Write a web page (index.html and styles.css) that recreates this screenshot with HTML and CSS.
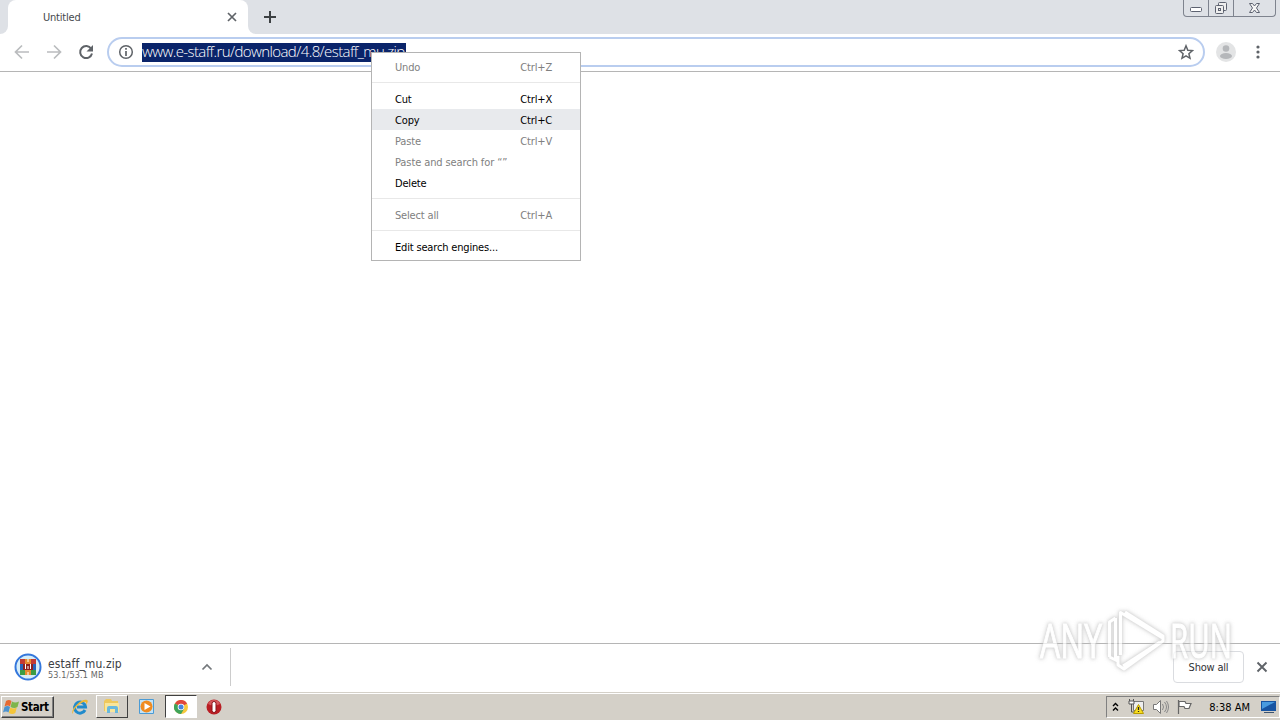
FILE: index.html
```html
<!DOCTYPE html>
<html lang="en">
<head>
<meta charset="utf-8">
<title>Untitled</title>
<link rel="stylesheet" href="styles.css">
</head>
<body>
<div class="screen">
  <header class="tabstrip">
    <div class="previous-tab"></div>
    <div class="tab"><span class="tab-title">Untitled</span>
      <svg class="tab-close" width="10" height="10" viewBox="0 0 10 10"><path d="M1 1l8 8M9 1L1 9" stroke="#5f6368" stroke-width="1.7"/></svg>
    </div>
    <div class="tab-edge"><svg width="14" height="14" viewBox="0 0 14 14"><path d="M7 1v12M1 7h12" stroke="#3c4043" stroke-width="2"/></svg></div>
    <div class="window-controls">
      <span class="control minimize"><svg width="14" height="8"><rect x="1.500" y="1.500" width="11" height="4" rx="1" fill="#fff" stroke="#5d6270"/></svg></span>
      <span class="control restore"><svg width="14" height="14" fill="#eee" stroke="#5d6270"><rect x="4.500" y="1.500" width="8" height="8" rx="1"/><rect x="1.500" y="4.500" width="8" height="8" rx="1"/><rect x="4.500" y="7.500" width="2" height="2"/></svg></span>
      <span class="control close"><svg width="13" height="12" viewBox="0 0 13 12"><path d="M1.500 1.500h3l2 2.500 2-2.500h3L8.500 6l3 4.500h-3l-2-2.500-2 2.500h-3L4.500 6z" fill="#f5f5f5" stroke="#5d6270"/></svg></span>
    </div>
  </header>
  <nav class="toolbar">
    <svg class="back" width="16" height="16" viewBox="0 0 16 16" fill="none" stroke="#babcbe" stroke-width="1.700"><path d="M15 8H2M8 1.500L1.500 8 8 14.500"/></svg>
    <svg class="forward" width="16" height="16" viewBox="0 0 16 16" fill="none" stroke="#babcbe" stroke-width="1.700"><path d="M1 8h13M8 1.500L14.500 8 8 14.500"/></svg>
    <svg class="reload" width="16" height="16" viewBox="0 0 16 16"><path d="M13.200 4.800A6 6 0 1 0 14 9.500" fill="none" stroke="#5f6368" stroke-width="2"/><path d="M15 1v6.500H8.500z" fill="#5f6368"/></svg>
    <div class="address">
      <svg class="info" width="16" height="16" viewBox="0 0 16 16"><circle cx="8" cy="8" r="6.300" fill="none" stroke="#5f6368" stroke-width="1.500"/><path d="M8 7v5M8 4v1.700" stroke="#5f6368" stroke-width="1.700"/></svg>
      <span class="url"><span class="url-text">www.e-staff.ru/download/4.8/estaff_mu.zip</span></span>
      <svg class="star" width="16" height="16" viewBox="0 0 16 16"><path d="M8 1.800l1.800 4.400 4.700.4-3.600 3.100 1.100 4.600L8 11.900l-4 2.400 1.100-4.600-3.600-3.100 4.700-.4z" fill="none" stroke="#5f6368" stroke-width="1.500"/></svg>
    </div>
    <svg class="profile" width="20" height="20" viewBox="0 0 20 20"><circle cx="10" cy="10" r="10" fill="#e3e4e5"/><circle cx="10" cy="6.500" r="3.300" fill="#b5b7ba"/><ellipse cx="10" cy="14" rx="6" ry="3" fill="#b5b7ba"/></svg>
    <svg class="more" width="4" height="14" fill="#5f6368"><circle cx="2" cy="2" r="1.600"/><circle cx="2" cy="7" r="1.600"/><circle cx="2" cy="12" r="1.600"/></svg>
  </nav>
  <main class="page"></main>
  <section class="shelf">
    <div class="download">
      <svg class="archive" width="28" height="28" viewBox="0 0 28 28"><circle cx="14" cy="14" r="12.500" fill="#d6edf8" stroke="#3477dc" stroke-width="2"/><path fill="#c23a35" d="M6 6h16v5H6z"/><path fill="#2864ba" d="M6 11h16v6H6z"/><path fill="#3b9c45" d="M6 17h16v5H6z"/><path fill="#e78b2f" d="M11 6h6v16h-6z"/><path fill="#8e2020" d="M9 11h10v6H9z"/><path d="M11.500 11v5M16.500 11v5M14 13v3M14 6v3M14 19v3" stroke="#fff" fill="none"/></svg>
      <div class="download-info"><span class="filename">estaff_mu.zip</span><span class="filesize">53.1/53.1 MB</span></div>
      <svg class="chevron" width="12" height="8"><path d="M1.500 6.500L6 2l4.500 4.500" fill="none" stroke="#73777b" stroke-width="1.700"/></svg>
    </div>
    <div class="show-all"><span>Show all</span></div>
    <svg class="shelf-close" width="12" height="12"><path d="M1.500 1.500l9 9M10.500 1.500l-9 9" stroke="#5f6368" stroke-width="1.900"/></svg>
  </section>
  <footer class="taskbar">
    <div class="start">
      <svg width="17" height="16" viewBox="0 0 17 16"><path d="M3 2q3-2 5.500 0L7 7.500q-2-2-5.500 0z" fill="#e76a32"/><path d="M9 2.500q3 2 7 0L14.500 8q-3 2-7 0z" fill="#7eb54b"/><path d="M1.500 8q3-2 5.500 0l-1.500 5.500Q3 11.500 0 13.500z" fill="#4c93cf"/><path d="M7.300 8.500q3 2 6.500 0L12.300 14q-3 2-6.500 0z" fill="#f4c53a"/></svg>
      <span>Start</span>
    </div>
    <div class="quick ie"><svg width="18" height="18" viewBox="0 0 18 18"><path d="M14 12A5.500 5.500 0 1 1 14.500 9H6" fill="none" stroke="#218bcc" stroke-width="3"/><path d="M2 16C-2 13 10 0 16 2q2 1-1 5 1-4-2-3C8 5 1 13 2 16" fill="#eeb936"/></svg></div>
    <div class="quick explorer"><svg width="18" height="17" viewBox="0 0 18 17"><path d="M1 3l2-2h5l1 2h6v10H1z" fill="#eec85d"/><path d="M2 5h14v9H2z" fill="#f8e59b"/><path d="M4 15v-5q0-2 2-2h7q2 0 2 2v5h-3v-4H7v4z" fill="#68b8dd"/></svg></div>
    <div class="quick player"><svg width="17" height="17" viewBox="0 0 17 17"><path d="M1.500 1.500h14v14h-14z" fill="#c3e3f7" stroke="#4b9bd5"/><circle cx="8.500" cy="8.500" r="6" fill="#f08b20"/><path d="M6.500 5l6 3.500-6 3.500z" fill="#fff"/></svg></div>
    <div class="quick chrome"><svg width="14" height="14" viewBox="0 0 14 14"><circle cx="7" cy="7" r="7" fill="#f6c83d"/><path d="M7 7L.9 3.500A7 7 0 0 1 13.100 3.500z" fill="#df473d"/><path d="M7 7L.9 3.500A7 7 0 0 0 7 14l3-5z" fill="#3fa45a"/><circle cx="7" cy="7" r="3.300" fill="#fff"/><circle cx="7" cy="7" r="2.500" fill="#4584de"/></svg></div>
    <div class="quick opera"><svg width="16" height="16" viewBox="0 0 16 16"><circle cx="8" cy="8" r="7.500" fill="#b91e24"/><path d="M2 5a6.500 6.500 0 0 1 12 0Q8 8 2 5" fill="#d6585b"/><rect x="6" y="2.500" width="4" height="11" rx="2" fill="#fff" stroke="#861319"/></svg></div>
    <div class="tray">
      <svg class="expand" width="7" height="10"><path d="M1 4l2.500-2.500L6 4M1 8.500L3.500 6 6 8.500" fill="none" stroke="#000" stroke-width="1.400"/></svg>
      <svg class="network" width="17" height="17" viewBox="0 0 17 17"><path d="M5.500 3.500h10v9h-10z" fill="#eee" stroke="#777"/><path d="M1.500 1v4h4V1M3.500 5v9h4" fill="none" stroke="#555"/><path d="M1 3h5v3H1z" fill="#fff" stroke="#555"/><path d="M10.500 6.500l5 9h-10z" fill="#f8dd20" stroke="#b89c00"/><path d="M10.500 9v3m0 1v1" stroke="#222" stroke-width="1.300"/></svg>
      <svg class="volume" width="17" height="16" viewBox="0 0 17 16"><path d="M1.500 5.500h3l4-4v13l-4-4h-3z" fill="#fff" stroke="#777"/><path d="M10.500 5q2 3 0 6M12.500 3q4 5 0 10M14.500 2q4 6 0 12" fill="none" stroke="#888"/></svg>
      <svg class="flag" width="17" height="16" viewBox="0 0 17 16"><path d="M2.500 1v14M3 2.500h6l1 2h5l-2 5H9l-1-2H3z" fill="#fff" stroke="#666" stroke-width="1.200"/></svg>
      <span class="clock">8:38 AM</span>
      <svg class="desktop" width="15" height="14" viewBox="0 0 15 14"><path d="M0 1h15v10H0z" fill="#1754a2"/><path d="M1 2h13L1 9z" fill="#499bdf"/><path d="M3 12h10v1H3z" fill="#3b5370"/></svg>
    </div>
  </footer>
  <div class="menu">
    <div class="item disabled"><span>Undo</span><kbd>Ctrl+Z</kbd></div><hr>
    <div class="item"><span>Cut</span><kbd>Ctrl+X</kbd></div>
    <div class="item selected"><span>Copy</span><kbd>Ctrl+C</kbd></div>
    <div class="item disabled"><span>Paste</span><kbd>Ctrl+V</kbd></div>
    <div class="item disabled"><span class="search-label">Paste and search for “”</span></div>
    <div class="item"><span>Delete</span></div><hr>
    <div class="item disabled"><span>Select all</span><kbd>Ctrl+A</kbd></div><hr>
    <div class="item"><span>Edit search engines...</span></div>
  </div>
  <svg class="watermark" width="210" height="80" viewBox="0 0 210 80">
    <g class="watermark-mark">
      <text x="9" y="54" textLength="62" lengthAdjust="spacingAndGlyphs">ANY</text>
      <path d="M89.500 51V8.500l42 25.500M129 38L92 62M78.500 53V18l6-4M78.500 53l8 4M84.500 14v42M94 8l38 24v5L93 65l-6-4v-9" fill="none" stroke-width="3" stroke-linejoin="round"/>
      <text x="139" y="54" textLength="62" lengthAdjust="spacingAndGlyphs">RUN</text>
    </g>
  </svg>
</div>
</body>
</html>
```

FILE: styles.css
```css
* { box-sizing: border-box; }
body { margin: 0; }
.screen { position: relative; width: 1280px; height: 720px; overflow: hidden; display: flex; flex-direction: column; background: #fff; font: 11px/13px "DejaVu Sans Condensed", "DejaVu Sans", sans-serif; font-stretch: condensed; color: #000; }
svg { display: block; flex: none; }
.tabstrip { height: 34px; flex: none; display: flex; background: #fff; }
.previous-tab { width: 8px; background: #dee1e6; border-bottom-right-radius: 8px; }
.tab { width: 240px; display: flex; align-items: center; padding: 0 11px 0 35px; background: linear-gradient(#dee1e6 0 8px, #fff 8px); position: relative; }
.tab::before { content: ""; position: absolute; inset: 0; background: #fff; border-radius: 8px 8px 0 0; }
.tab-title { position: relative; color: #45484c; letter-spacing: -.2px; }
.tab-close { position: relative; margin-left: auto; }
.tab-edge { flex: 1; padding: 10px 15px; background: #dee1e6; border-bottom-left-radius: 8px; }
.window-controls { width: 97px; background: #dee1e6; display: flex; padding: 0 4px 17px 0; }
.control { border: solid #7e838e; border-width: 0 1px 1px 0; display: flex; align-items: center; justify-content: center; }
.minimize { width: 26px; border-left-width: 1px; border-bottom-left-radius: 4px; padding-top: 4px; }
.restore { width: 25px; }
.close { flex: 1; border-bottom-right-radius: 4px; }
.toolbar { height: 38px; flex: none; display: flex; align-items: center; border-bottom: 1px solid #b5b5b5; padding: 0 20px 1px 14px; }
.forward { margin-left: 16px; }
.reload { margin-left: 16px; }
.address { margin-left: 13px; width: 1098px; height: 30px; border: 2px solid #b9cdef; border-radius: 15px; display: flex; align-items: center; padding: 0 9px; }
.url { margin-left: 8px; width: 264px; height: 19px; background: #0a246a; color: #fff; font: 300 15px/17px "Open Sans", sans-serif; white-space: nowrap; }
.url-text { letter-spacing: -.6px; }
.star { margin-left: auto; }
.profile { margin-left: 11px; }
.more { margin-left: auto; }
.page { flex: 1; }
.shelf { height: 49px; flex: none; border-top: 1px solid #b5b5b5; display: flex; align-items: center; padding: 0 12px 2px 14px; }
.download { width: 217px; height: 38px; border-right: 1px solid #ccc; display: flex; align-items: center; }
.download-info { display: flex; flex-direction: column; margin-left: 6px; padding-top: 3px; color: #3c4043; }
.filename { font-size: 12px; line-height: 13px; letter-spacing: .1px; }
.filesize { font-size: 9px; line-height: 9px; letter-spacing: .15px; color: #666; }
.chevron { margin-left: auto; margin-right: 17px; }
.show-all { margin-left: auto; width: 71px; height: 32px; border: 1px solid #dadce0; border-radius: 4px; display: flex; align-items: center; justify-content: center; color: #303236; letter-spacing: -.2px; }
.shelf-close { margin-left: 12px; }
.taskbar { height: 28px; flex: none; background: #d4d0c8; border-top: 1px solid #d4d0c8; box-shadow: inset 0 1px #fff; padding: 2px 0 2px 1px; display: flex; align-items: center; }
.start { width: 53px; height: 22px; display: flex; align-items: center; gap: 1px; padding-left: 1px; border: 1px solid; border-color: #fff #404040 #404040 #fff; box-shadow: inset -1px -1px #808080; font-weight: bold; font-size: 11.5px; letter-spacing: -.35px; }
.start span, .clock { padding-top: 2px; }
.quick { width: 32px; height: 23px; display: flex; align-items: center; justify-content: center; }
.ie { margin-left: 10px; }
.explorer { border: 1px solid; border-color: #fff #404040 #404040 #fff; }
.player { margin-left: 2px; }
.chrome { margin-left: 3px; background: #fff; border: 1px solid; border-color: #404040 #fff #fff #404040; }
.opera { margin-left: 1px; }
.tray { margin-left: auto; width: 174px; height: 22px; border: 1px solid; border-color: #808080 #fff #fff #808080; display: flex; align-items: center; padding: 0 3px 0 5px; }
.network { margin-left: 9px; }
.volume { margin-left: 7px; }
.flag { margin-left: 7px; }
.clock { margin-left: auto; margin-right: 11px; white-space: nowrap; letter-spacing: 0; }
.menu { position: absolute; left: 371px; top: 52px; width: 210px; height: 209px; border: 1px solid #b4b4b4; background: #fff; padding-top: 3px; }
.item { height: 21px; display: flex; align-items: center; justify-content: space-between; padding: 2px 28px 0 23px; letter-spacing: -.17px; white-space: nowrap; }
.item kbd { font: inherit; }
.search-label { letter-spacing: -.1px; }
.disabled { color: #808080; }
.selected { background: #e8eaed; }
.menu hr { margin: 5px 0; border: 0; border-top: 1px solid #e8e8e8; }
.watermark { position: absolute; left: 1031px; top: 604px; }
.watermark-mark { fill: #fff; stroke: #fff; opacity: .72; filter: drop-shadow(0 0 1px #ccc) drop-shadow(0 0 2px #bbb); }
.watermark text { font: 400 47px "Open Sans", sans-serif; stroke-width: 1px; }
```
